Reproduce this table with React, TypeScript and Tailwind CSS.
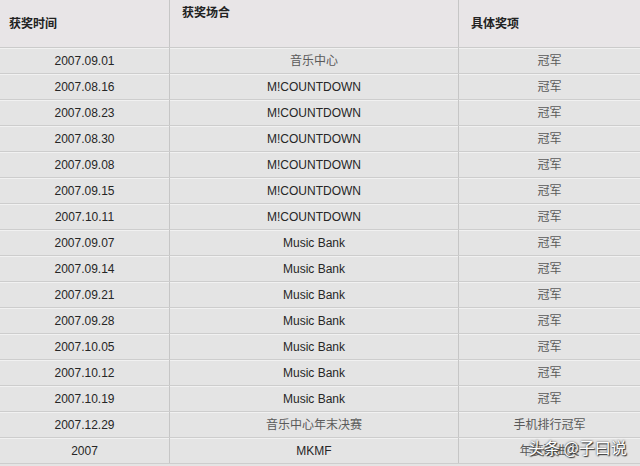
const rows: [string, string, string][] = [
  ["2007.09.01", "音乐中心", "冠军"],
  ["2007.08.16", "M!COUNTDOWN", "冠军"],
  ["2007.08.23", "M!COUNTDOWN", "冠军"],
  ["2007.08.30", "M!COUNTDOWN", "冠军"],
  ["2007.09.08", "M!COUNTDOWN", "冠军"],
  ["2007.09.15", "M!COUNTDOWN", "冠军"],
  ["2007.10.11", "M!COUNTDOWN", "冠军"],
  ["2007.09.07", "Music Bank", "冠军"],
  ["2007.09.14", "Music Bank", "冠军"],
  ["2007.09.21", "Music Bank", "冠军"],
  ["2007.09.28", "Music Bank", "冠军"],
  ["2007.10.05", "Music Bank", "冠军"],
  ["2007.10.12", "Music Bank", "冠军"],
  ["2007.10.19", "Music Bank", "冠军"],
  ["2007.12.29", "音乐中心年末决赛", "手机排行冠军"],
  ["2007", "MKMF", "年度歌曲奖"],
];

const latin = /^[\x00-\x7f]+$/;

function Cell({ text, last }: { text: string; last?: boolean }) {
  const isLatin = latin.test(text);
  return (
    <div
      className={
        "flex items-center justify-center pt-[1px] " +
        (last ? "" : "border-r border-[#c6c6c6] ") +
        (isLatin
          ? "font-['Liberation_Sans',sans-serif] text-[12px] text-[#262626]"
          : "font-['Liberation_Serif','Noto_Sans_CJK_SC',serif] text-[12px] text-[#5a5a5a]")
      }
    >
      {text}
    </div>
  );
}

export default function App() {
  return (
    <div className="relative h-[466px] w-[640px] overflow-hidden bg-[#e4e4e4]">
      <div className="grid h-[48px] grid-cols-[170px_289px_181px] border-b border-[#cbcbcb] bg-[#e8e5e7] font-['Liberation_Serif','Noto_Sans_CJK_SC',serif] text-[12px] font-bold text-[#222]">
        <div className="flex items-center border-r border-[#c6c6c6] pl-[9px] pt-[1px]">获奖时间</div>
        <div className="border-r border-[#c6c6c6] pl-[12px] pt-[4px]">获奖场合</div>
        <div className="flex items-center pl-[12px]">具体奖项</div>
      </div>
      {rows.map((r, i) => (
        <div
          key={i}
          className="grid h-[26px] grid-cols-[170px_289px_181px] border-b border-[#cdcdcd] shadow-[inset_0_1px_0_#f1f1f1]"
        >
          <Cell text={r[0]} />
          <Cell text={r[1]} />
          <Cell text={r[2]} last />
        </div>
      ))}
      <div className="absolute left-[528px] top-[439px] font-['Noto_Sans_CJK_SC',sans-serif] text-[16px] leading-none text-white [text-shadow:0_0_2px_#333,1px_1px_1px_#333]">
        头条 @子曰说
      </div>
    </div>
  );
}
